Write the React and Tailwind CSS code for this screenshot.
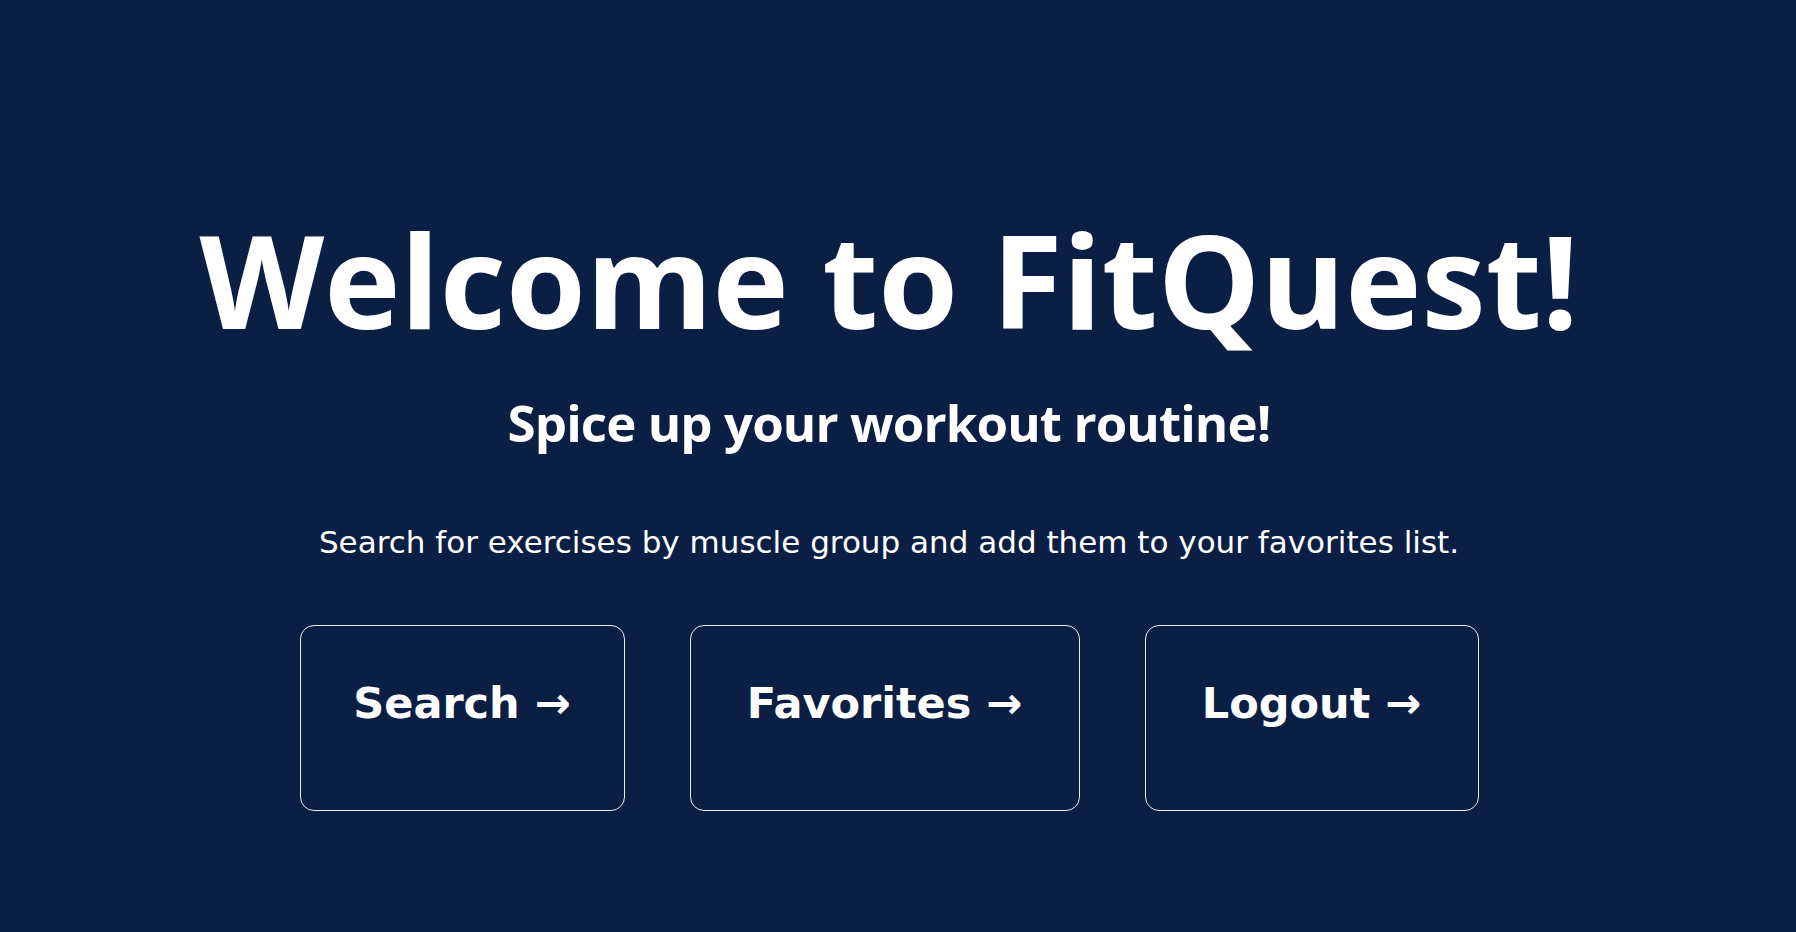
const links = [
    { label: 'Search', href: '/search', width: 'w-[325px]' },
    { label: 'Favorites', href: '/favorites', width: 'w-[390px]' },
    { label: 'Logout', href: '/logout', width: 'w-[334px]' },
];

function NavCard({ label, href, width }) {
    return (
        <a href={href}
            className={`${width} h-[186px] pt-[56px] text-center border border-[#ececec] rounded-[14px] text-white no-underline font-['DejaVu_Sans',sans-serif] font-bold text-[43px] leading-none whitespace-nowrap`}>
            {label} →
        </a>
    );
}

export default function App() {
    return (
        <div className="min-h-screen bg-[#0b1f45] text-white flex flex-col items-center pt-[215px] pr-[18px]">
            <h1 className="font-['Open_Sans',sans-serif] font-bold text-[129px] leading-none whitespace-nowrap">
                Welcome to FitQuest!
            </h1>
            <h2 className="mt-[53px] font-['Open_Sans',sans-serif] font-bold text-[51px] leading-none tracking-[-0.9px] whitespace-nowrap">
                Spice up your workout routine!
            </h2>
            <p className="mt-[79px] font-['DejaVu_Sans',sans-serif] text-[31px] leading-none whitespace-nowrap">
                Search for exercises by muscle group and add them to your favorites list.
            </p>
            <div className="mt-[67px] flex gap-[65px]">
                {links.map(l => <NavCard key={l.label} {...l} />)}
            </div>
        </div>
    );
}
